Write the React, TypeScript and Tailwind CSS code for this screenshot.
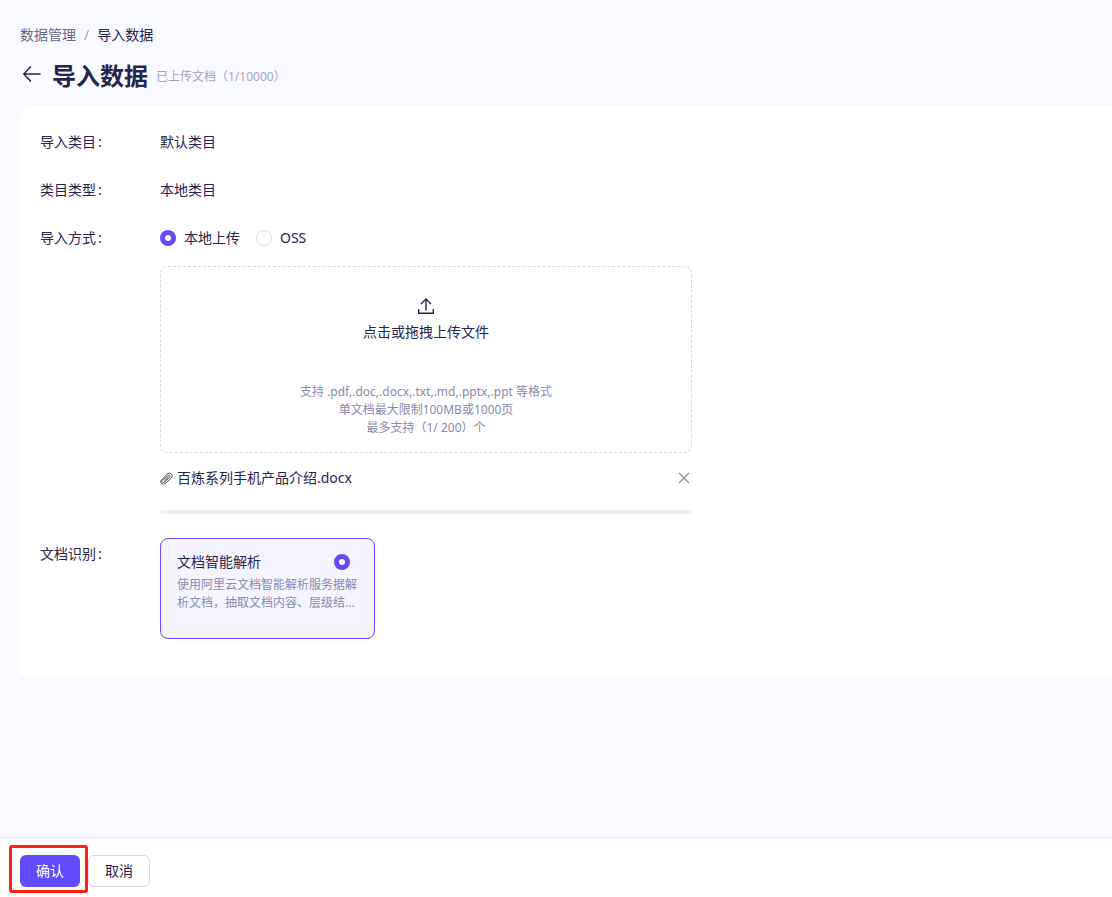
import { useState, type ReactNode } from 'react';

function FormRow({ label, children }: { label: string; children: ReactNode }) {
  return (
    <div className="flex items-start">
      <span className="w-[120px] shrink-0 leading-8">
        {label}
        <span className="ml-0.5">:</span>
      </span>
      <div className="min-w-0 flex-1">{children}</div>
    </div>
  );
}

const radioClass =
  'm-0 size-4 shrink-0 appearance-none rounded-full border border-[#d9d9e0] bg-white checked:border-[5px] checked:border-[#624aff]';

function BackIcon() {
  return (
    <svg width="20" height="20" viewBox="0 0 20 20" fill="none" stroke="currentColor" strokeWidth="1.5" aria-hidden="true">
      <path d="M18.6 10H2M8.9 2.4L1.8 10l7.1 7.6" />
    </svg>
  );
}

function UploadIcon() {
  return (
    <svg width="16" height="16" viewBox="0 0 16 16" fill="none" stroke="currentColor" strokeWidth="1.4" aria-hidden="true">
      <path d="M8 12.4V1.2M3 6l5-5 5 5M0.7 11v4.3h14.6V11" />
    </svg>
  );
}

function ClipIcon() {
  return (
    <svg width="13" height="14" viewBox="0 0 13 14" fill="none" stroke="#4a4a4a" strokeWidth="1" strokeLinecap="round" aria-hidden="true">
      <path d="M3.6 8.6L8 4.6c1.3-1.1 2.8.4 1.6 1.6L5 10.8c-1.9 1.8-4.4-.4-2.6-2.5L7 3.2c2.9-2.8 6.9.6 4.2 3.8l-4.6 4.5c-2.8 2.5-5.8 1.6-5.8-.9 0-.7.3-1.4.9-2" />
      <path d="M4.6 9.7l3.8-3.6" />
    </svg>
  );
}

function CloseIcon() {
  return (
    <svg width="16" height="16" viewBox="0 0 16 16" fill="none" stroke="currentColor" strokeWidth="1.1" aria-hidden="true">
      <path d="M3 3l10 10M13 3L3 13" />
    </svg>
  );
}

export default function App() {
  const [method, setMethod] = useState('local');

  return (
    <div className="flex min-h-screen flex-col bg-[#f9faff] font-['Noto_Sans','Noto_Sans_CJK_SC',sans-serif] text-sm text-[#26244c]">
      <main className="flex-1 pt-6 pb-5 pl-5">
        <nav aria-label="breadcrumb" className="flex gap-2 leading-[22px]">
          <a href="#data" className="text-[#6a6882]">数据管理</a>
          <span className="text-[#a5a4b8]">/</span>
          <span>导入数据</span>
        </nav>

        <header className="mt-3 flex h-9 items-center">
          <button type="button" aria-label="返回" className="mr-2 flex w-6 justify-center pb-1">
            <BackIcon />
          </button>
          <h1 className="text-2xl font-bold">导入数据</h1>
          <span className="ml-2 pt-0.5 text-xs text-[#a5a4c0]">已上传文档（1/10000）</span>
        </header>

        <section className="mt-3 flex flex-col gap-4 rounded-tl-2xl bg-white px-5 pt-5 pb-9">
          <FormRow label="导入类目">
            <p className="leading-8">默认类目</p>
          </FormRow>
          <FormRow label="类目类型">
            <p className="leading-8">本地类目</p>
          </FormRow>
          <FormRow label="导入方式">
            <div className="flex h-8 items-center gap-4">
              <label className="flex items-center gap-2">
                <input
                  type="radio"
                  name="method"
                  className={radioClass}
                  checked={method === 'local'}
                  onChange={() => setMethod('local')}
                />
                本地上传
              </label>
              <label className="flex items-center gap-2">
                <input
                  type="radio"
                  name="method"
                  className={radioClass}
                  checked={method === 'oss'}
                  onChange={() => setMethod('oss')}
                />
                OSS
              </label>
            </div>

            <button
              type="button"
              className="mt-3 flex w-full max-w-[532px] flex-col items-center rounded-lg border border-dashed border-[#d9d9d9] px-4 pt-[31px] pb-[15px]"
            >
              <UploadIcon />
              <span className="mt-2 leading-5">点击或拖拽上传文件</span>
              <span className="mt-[41px] text-xs leading-[18px] text-[#878aab]">
                支持 .pdf,.doc,.docx,.txt,.md,.pptx,.ppt 等格式
                <br />
                单文档最大限制100MB或1000页
                <br />
                最多支持（1/ 200）个
              </span>
            </button>

            <div className="mt-3 max-w-[532px]">
              <div className="flex h-[26px] items-center">
                <ClipIcon />
                <span className="ml-1 flex-1">百炼系列手机产品介绍.docx</span>
                <button type="button" aria-label="删除文件" className="text-[#878aab]">
                  <CloseIcon />
                </button>
              </div>
              <div className="mt-[19px] h-1 rounded-full bg-[#f0f0f4]" />
            </div>
          </FormRow>
          <div className="mt-2">
            <FormRow label="文档识别">
              <label className="block h-[101px] w-[215px] rounded-lg border border-[#624aff] bg-[#f6f4ff] px-4 pt-3">
                <span className="flex h-[22px] items-center justify-between pr-2">
                  文档智能解析
                  <input type="radio" name="parser" defaultChecked className={radioClass} />
                </span>
                <span className="mt-[3px] block text-xs leading-[18px] text-[#878aab]">
                  使用阿里云文档智能解析服务据解析文档，抽取文档内容、层级结...
                </span>
              </label>
            </FormRow>
          </div>
        </section>
      </main>

      <footer className="flex gap-2 bg-white px-5 pt-4 pb-2.5 shadow-[0_-1px_4px_rgba(38,36,76,0.08)]">
        <div className="relative z-10">
          <button type="button" className="h-8 rounded-md bg-[#624aff] px-4 text-white">
            确认
          </button>
          <span className="pointer-events-none absolute -top-2.5 -right-2 -bottom-1.5 -left-[11px] rounded-[3px] border-3 border-[#ff1d16]" />
        </div>
        <button type="button" className="h-8 rounded-md border border-[#d8d6e6] bg-white px-4">
          取消
        </button>
      </footer>
    </div>
  );
}
